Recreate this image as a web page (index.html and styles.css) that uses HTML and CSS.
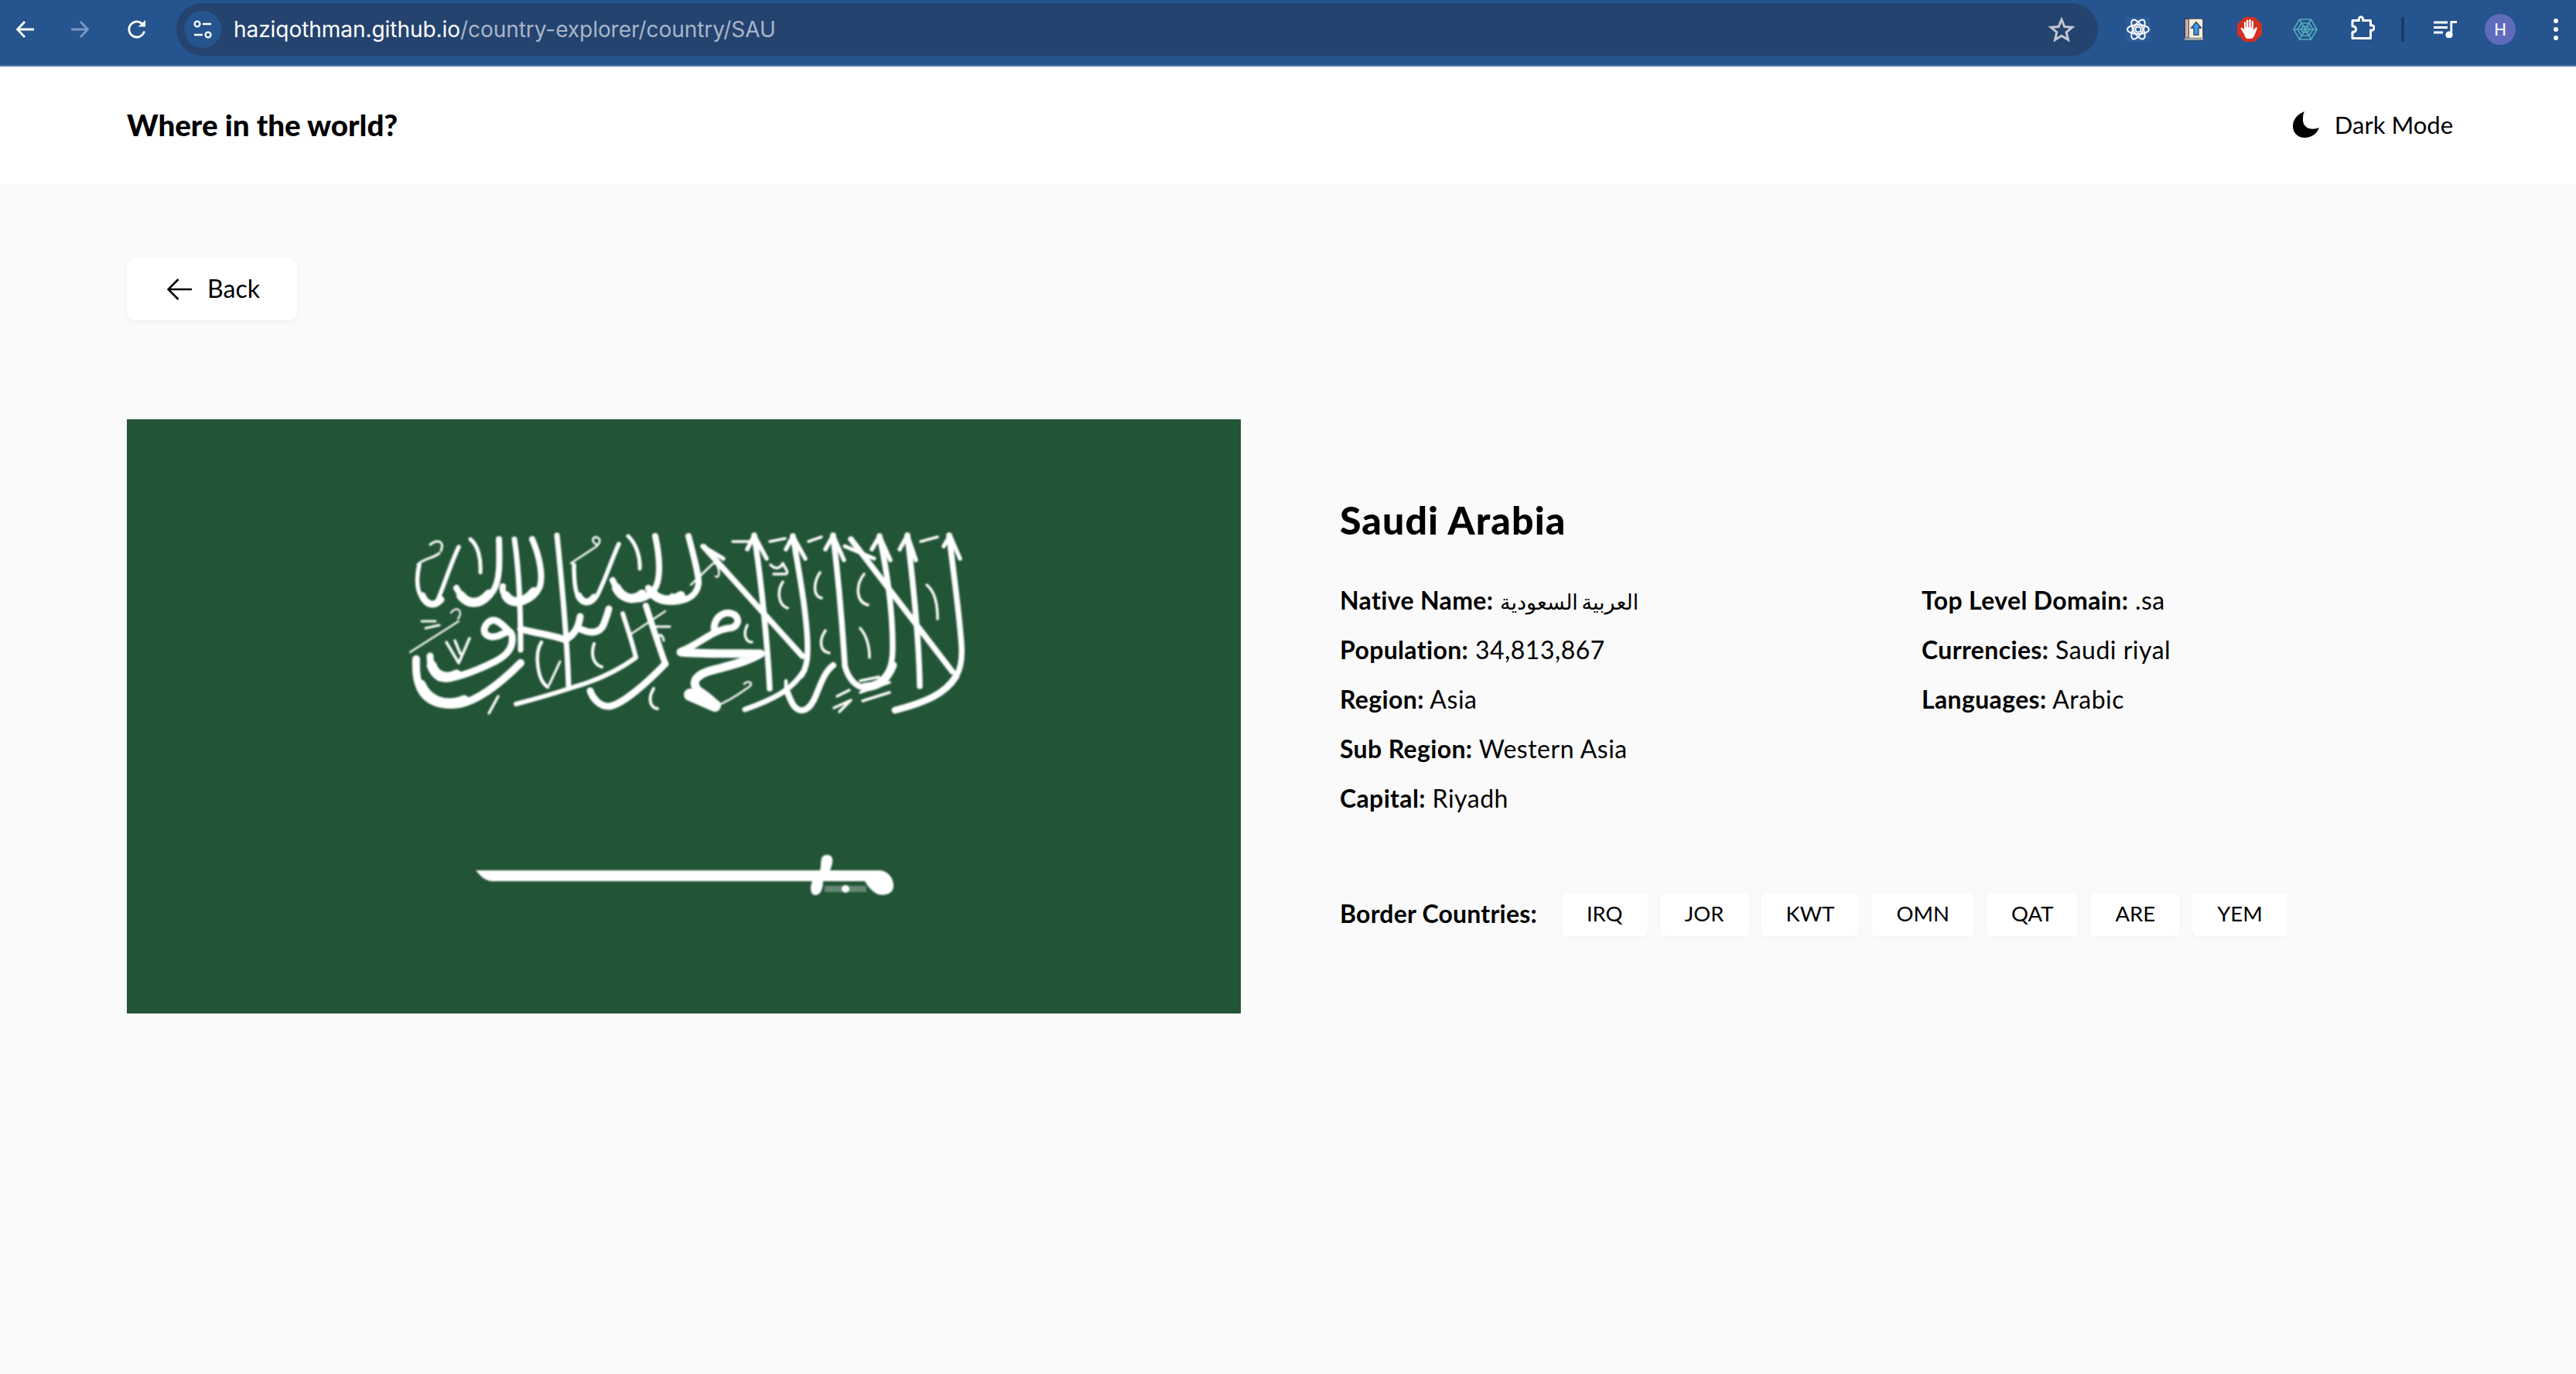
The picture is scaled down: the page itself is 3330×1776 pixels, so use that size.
FILE: index.html
```html
<!DOCTYPE html>
<html lang="en">
<head>
<meta charset="utf-8">
<title>Saudi Arabia - Where in the world?</title>
<link rel="stylesheet" href="styles.css">
</head>
<body>
<div class="toolbar">
  <svg class="nav-icon nav-back" viewBox="0 0 26 24"><path d="M24 12H3M12 2 2.500 12 12 22" fill="none" stroke="#fff" stroke-width="2.800"/></svg>
  <svg class="nav-icon nav-forward" viewBox="0 0 26 24"><path d="M2 12H23M14 2 23.500 12 14 22" fill="none" stroke="#7d99c0" stroke-width="2.800"/></svg>
  <svg class="nav-icon nav-reload" viewBox="0 0 26 24"><path d="M22.500 14.500A10 10 0 1 1 19.500 4.500" fill="none" stroke="#fff" stroke-width="2.800"/><path d="M14.500 8.500H24V0Z" fill="#fff"/></svg>
  <div class="urlbar">
    <span class="site-pill"><svg class="site-icon" viewBox="0 0 26 26"><circle cx="6" cy="6" r="3.400" fill="none" stroke="#fff" stroke-width="2.400"/><path d="M13 6H24M2 20H13" stroke="#fff" stroke-width="2.600"/><circle cx="20" cy="20" r="3.400" fill="none" stroke="#fff" stroke-width="2.400"/></svg></span>
    <span class="url"><span class="url-host">haziqothman.github.io</span><span class="url-path">/country-explorer/country/SAU</span></span>
    <svg class="star" viewBox="0 0 32 30"><path d="M16 3 19.600 11.700 29 12.400 21.800 18.500 24 27.700 16 22.800 8 27.700 10.200 18.500 3 12.400 12.400 11.700Z" fill="none" stroke="#c3c8cf" stroke-width="2.800"/></svg>
  </div>
  <div class="extensions">
    <span class="ext"><svg class="ext-icon" viewBox="0 0 32 32"><rect width="32" height="32" rx="3" fill="#2b5c9c"/><g fill="none" stroke="#fff" stroke-width="1.900"><ellipse cx="16" cy="16" rx="14" ry="6"/><ellipse cx="16" cy="16" rx="14" ry="6" transform="rotate(60 16 16)"/><ellipse cx="16" cy="16" rx="14" ry="6" transform="rotate(120 16 16)"/><circle cx="16" cy="16" r="3.500"/></g></svg></span>
    <span class="ext"><svg class="ext-book" viewBox="0 0 26 30"><rect x="1" y="1" width="24" height="28" rx="2" fill="#f7efdc" stroke="#33475f" stroke-width="1.600"/><rect x="1.500" y="1.500" width="5" height="24" fill="#d9a8a8" stroke="#33475f" stroke-width="1"/><rect x="1" y="25.500" width="24" height="3.500" fill="#9aa3a8"/><path d="M16 5.500 22.500 13H19V22H13V13H9.500Z" fill="#3e97ea" stroke="#26405f" stroke-width="1.300"/></svg></span>
    <span class="ext"><svg class="ext-icon" viewBox="0 0 32 32"><path d="M9.400 0H22.600L32 9.400V22.600L22.600 32H9.400L0 22.600V9.400Z" fill="#d33023"/><path d="M9 22 4.800 15.500C4.200 14 6 13.200 7 14.200L9 16.500V7C9 5.500 11 5.500 11.200 7V13.500H12V4.700C12 3.200 14.300 3.200 14.300 4.700V13.500H15.300V4C15.300 2.500 17.700 2.500 17.700 4V13.500H18.700V6C18.700 4.500 21 4.500 21 6V17L24 13.500C25 12.600 26.300 13.600 25.800 15L22 24.500C21 27 19 28 16.500 28H14C11.500 28 10 26 9 22Z" fill="#fff"/></svg></span>
    <span class="ext"><svg class="ext-web" viewBox="0 0 32 28"><g fill="none" stroke="#55a9ba" stroke-width="1.700"><path d="M8.500 1H23.500L31 14 23.500 27H8.500L1 14Z"/><path d="M11 6H21L26 14 21 22H11L6 14Z"/><path d="M13 10H19L21.500 14 19 18H13L10.500 14Z"/><path d="M8.500 1 23.500 27M23.500 1 8.500 27M1 14H31"/></g></svg></span>
    <span class="ext"><svg class="ext-puzzle" viewBox="0 0 32 32"><path d="M3 6.500H11.500C10.500 3.500 12.500 1.800 14 1.800S17.500 3.500 16.500 6.500H26.500V13C29.500 12 31 14 31 16S29.500 20 26.500 19V29.500H3V21.500C6.500 21.500 7.500 19.500 7.500 17.800S6.500 14 3 14Z" fill="none" stroke="#fff" stroke-width="3" stroke-linejoin="round"/></svg></span>
    <span class="ext-sep-box"><span class="ext-sep"></span></span>
    <span class="ext ext-music-box"><svg class="ext-music" viewBox="0 0 30 22"><path d="M0 2H18M0 8.500H18M0 15H12" stroke="#fff" stroke-width="2.800"/><path d="M22.800 18V1.500H30" fill="none" stroke="#fff" stroke-width="2.800"/><circle cx="20" cy="18" r="4.600" fill="#fff"/></svg></span>
    <span class="ext ext-avatar-box"><span class="avatar">H</span></span>
    <span class="ext-dots-box"><svg class="ext-dots" viewBox="0 0 6 28"><circle cx="3" cy="3" r="3" fill="#fff"/><circle cx="3" cy="14" r="3" fill="#fff"/><circle cx="3" cy="25" r="3" fill="#fff"/></svg></span>
  </div>
</div>

<header class="site-header">
  <h1 class="brand">Where in the world?</h1>
  <div class="mode">
    <svg class="moon" viewBox="0 0 34 34"><path d="M15 0C5 4 0 11 0 19 0 28 7 34 15 34 24 34 31 29 34 21 24 25 14 22 13 12 13 7 13 3 15 0Z" fill="#000"/></svg>
    <span>Dark Mode</span>
  </div>
</header>

<main class="page">
  <button class="back-btn">
    <svg class="back-arrow" viewBox="0 0 32 28"><path d="M32 14H2M14.500 1 1.500 14 14.500 27" fill="none" stroke="#000" stroke-width="2.500"/></svg>
    <span>Back</span>
  </button>
  <section class="detail">
    <svg class="flag" viewBox="164 542 1440 768" role="img" aria-label="Flag of Saudi Arabia">
      <defs><filter id="soft" x="-5%" y="-5%" width="110%" height="110%"><feGaussianBlur stdDeviation="1"/></filter></defs>
      <rect x="164" y="542" width="1440" height="768" fill="#225436"/>
      <g filter="url(#soft)" fill="none" stroke="#fff" stroke-linecap="round" stroke-linejoin="round">
        <g stroke-width="7.500">
          <path d="M1227 692C1231 730 1240 790 1243 835 1244 852 1241 866 1236 874"/>
          <path d="M1173 692C1180 750 1188 820 1189 887"/>
          <path d="M1100 697 1231 868"/>
          <path d="M1137 693C1147 740 1154 790 1154 838 1154 868 1142 886 1122 889 1106 890 1096 876 1092 860"/>
          <path d="M1077 692C1084 750 1089 810 1092 857"/>
          <path d="M1025 693C1034 745 1044 800 1044 840 1044 856 1041 866 1036 873"/>
          <path d="M975 692C984 750 992 830 995 890"/>
          <path d="M910 707 1037 848"/>
          <path d="M947 700 980 700M995 700 1015 696M1045 700 1062 694M1190 700 1212 694" stroke-width="3.500"/>
          <path d="M1092 706 1130 722" stroke-width="5"/>
          <path d="M1220 706 1228 692 1241 722M1163 710 1173 692 1184 724M1127 710 1137 693 1151 724M1016 710 1025 693 1041 722M966 710 975 692 991 722M1067 710 1077 692 1091 724M908 706 935 722" stroke-width="5.500"/>
        </g>
        <g>
          <path d="M1236 874C1222 897 1196 908 1157 918" stroke-width="9"/>
          <path d="M1077 860C1064 870 1060 888 1052 905 1044 920 1034 922 1026 912 1022 906 1020 900 1018 895" stroke-width="8"/>
          <path d="M1040 866C1024 892 1000 904 963 917" stroke-width="7"/>
          <path d="M1154 860C1146 880 1134 888 1118 888" stroke-width="11"/>
        </g>
        <g stroke-width="3.500">
          <path d="M1060 740C1052 752 1050 770 1062 773"/><path d="M1012 752C1004 764 1006 782 1018 786"/><path d="M1117 742C1106 756 1106 778 1122 782"/>
          <path d="M1067 815C1058 828 1060 842 1072 844"/><path d="M966 808C960 820 964 830 972 830"/>
          <path d="M1112 812C1122 824 1124 840 1124 850M1198 756C1208 764 1212 780 1212 800"/>
          <path d="M996 730C1002 736 1008 736 1012 728 1016 738 1020 738 1016 742M1000 742H1014"/>
          <path d="M1136 875 1112 880M1112 895 1150 882M1150 895 1115 906"/>
          <path d="M1082 900 1098 892M1078 915 1100 905 1085 920"/>
          <path d="M1016 880V890" stroke-width="4.500"/>
          <path d="M925 913C945 905 958 895 968 888 975 884 968 878 962 884" stroke-width="2.500"/>
          <path d="M893 756 920 730C928 720 934 750 925 745" stroke-width="2.500"/>
        </g>
        <g stroke-width="8">
          <path d="M890 693C897 720 904 745 903 755 900 772 886 777 870 778 852 778 842 770 838 760"/>
          <path d="M847 693C853 720 854 745 848 758 842 772 826 778 814 773 802 767 796 760 792 750"/>
          <path d="M688 697C698 720 702 745 698 758 690 776 668 786 655 772 650 767 649 762 650 758"/>
          <path d="M645 697C646 730 646 750 638 763 628 778 610 786 598 772 594 767 592 764 590 760"/>
          <path d="M593 707C582 730 574 757 566 775 560 786 546 780 541 763 538 750 540 738 542 730" stroke-width="5.500"/>
          <path d="M800 703C790 725 782 750 772 770 764 784 752 782 746 768 742 758 742 742 742 730" stroke-width="5.500"/>
          <path d="M665 697C670 730 673 780 673 840" stroke-width="7"/>
          <path d="M720 692C726 750 733 820 735 887" stroke-width="7"/>
          <path d="M880 770C862 782 846 772 842 764M830 768C816 780 802 770 797 760M690 765C676 782 660 780 654 770M632 768C618 784 604 780 596 770" stroke-width="12"/>
          <path d="M570 775C560 786 550 780 546 770M768 772C760 782 752 778 748 770" stroke-width="9"/>
        </g>
        <g stroke-width="5">
          <path d="M608 697C618 705 622 722 621 740M812 693C822 702 828 720 827 735"/>
          <path d="M738 728 770 707C776 702 778 696 770 694 764 696 766 702 772 704 775 704" stroke-width="2.500"/>
          <path d="M860 790 815 820" stroke-width="2.500"/><path d="M866 770C876 778 874 768 868 768" stroke-width="2.500"/>
          <path d="M540 730C546 722 560 722 568 715M556 704C566 696 575 700 570 712" stroke-width="3"/>
          <path d="M530 843 593 803M583 792C590 782 600 790 592 800" stroke-width="2.200"/>
          <path d="M545 803H563M550 812 568 808" stroke-width="3"/>
          <path d="M577 830 593 857 607 825M595 845 588 828" stroke-width="3.500"/>
        </g>
        <g stroke-width="10">
          <path d="M660 818C648 806 638 794 628 808 622 818 630 826 644 822 654 818 660 812 662 822 664 836 656 847 640 855 610 870 580 880 568 876 558 870 556 858 556 848" stroke-width="9"/>
          <path d="M673 857C650 880 620 905 594 910 566 914 546 905 540 880 537 868 538 858 538 852" stroke-width="10"/>
          <path d="M600 905C575 915 552 905 544 885M590 872C574 880 562 872 558 860" stroke-width="13"/>
          <path d="M673 813C690 818 720 822 730 827 742 822 748 810 750 797M750 813C765 820 775 818 780 808 783 800 785 795 787 787" stroke-width="9"/>
          <path d="M835 783C842 805 850 830 860 858" stroke-width="8"/>
          <path d="M860 858C835 884 805 910 788 913 775 914 766 902 763 893" stroke-width="9"/>
          <path d="M805 793C812 815 818 832 822 850 800 866 770 880 742 888 715 897 690 904 667 910" stroke-width="6"/>
          <path d="M644 900 632 922" stroke-width="3.500"/>
          <path d="M700 830C690 845 695 880 708 888" stroke-width="4.500"/><path d="M724 855 710 885" stroke-width="3"/>
          <path d="M768 832C762 850 770 860 778 862" stroke-width="4"/><path d="M845 890C836 905 842 915 850 916" stroke-width="4"/>
        </g>
        <path d="M923 812C924 796 938 788 950 795 958 802 952 812 942 812 920 815 905 832 882 841" stroke-width="9"/>
        <path d="M880 843C915 846 950 844 983 845 960 858 935 862 915 868 895 875 896 885 902 892 910 898 918 902 924 910" stroke-width="11"/>
        <path d="M892 898 924 912" stroke-width="16"/>
        <path d="M845 810H866M852 828C850 815 858 822 858 828" stroke-width="3"/>
      </g>
      <g filter="url(#soft)" fill="#fff">
        <path d="M615 1125H1138C1148 1126 1156 1136 1155 1146 1154 1156 1144 1158 1135 1156 1128 1153 1122 1146 1118 1139H1064C1064 1146 1062 1157 1054 1157 1047 1157 1047 1146 1050 1139H635C626 1138 620 1131 615 1125Z"/>
        <path d="M1060 1125C1063 1118 1058 1105 1069 1105 1080 1105 1076 1118 1073 1125Z"/>
        <rect x="1066" y="1145" width="54" height="8" opacity=".3"/>
        <circle cx="1093" cy="1149" r="5"/>
      </g>
    </svg>
    <div class="info">
      <h2 class="country-name">Saudi Arabia</h2>
      <div class="facts">
        <ul class="fact-list">
          <li class="fact"><b>Native Name:</b> <span class="ar" dir="rtl" lang="ar">العربية السعودية</span></li>
          <li class="fact"><b>Population:</b> 34,813,867</li>
          <li class="fact"><b>Region:</b> Asia</li>
          <li class="fact"><b>Sub Region:</b> Western Asia</li>
          <li class="fact"><b>Capital:</b> Riyadh</li>
        </ul>
        <ul class="fact-list">
          <li class="fact"><b>Top Level Domain:</b> .sa</li>
          <li class="fact"><b>Currencies:</b> Saudi riyal</li>
          <li class="fact"><b>Languages:</b> Arabic</li>
        </ul>
      </div>
      <div class="borders">
        <b class="borders-label">Border Countries:</b>
        <a class="chip">IRQ</a><a class="chip">JOR</a><a class="chip">KWT</a><a class="chip">OMN</a><a class="chip">QAT</a><a class="chip">ARE</a><a class="chip">YEM</a>
      </div>
    </div>
  </section>
</main>
</body>
</html>
```
FILE: styles.css
```css
* { box-sizing: border-box; }
html, body { margin: 0; padding: 0; height: 100%; }
body {
  min-height: 1776px;
  background: #fafafa;
  color: #000;
  font-family: "Lato", "DejaVu Sans", sans-serif;
  font-size: 32px;
  overflow: hidden;
  display: flex;
  flex-direction: column;
}
.toolbar {
  height: 86px;
  flex: none;
  background: #25548f;
  border-bottom: 2px solid #4f78ab;
  display: flex;
  align-items: center;
  padding: 4px 0 12px 20px;
}
.nav-icon { width: 26px; height: 24px; flex: none; }
.nav-forward { margin-left: 44px; }
.nav-reload { margin-left: 48px; }
.urlbar {
  flex: 1;
  height: 68px;
  margin-left: 38px;
  background: #24436f;
  border-radius: 34px;
  display: flex;
  align-items: center;
  padding: 0 30px 0 10px;
}
.site-pill {
  width: 48px;
  height: 48px;
  border-radius: 50%;
  background: #25548f;
  display: flex;
  align-items: center;
  justify-content: center;
  flex: none;
}
.site-icon { width: 26px; height: 26px; }
.url {
  margin-left: 16px;
  font-family: "Inter", "Roboto", sans-serif;
  font-size: 28px;
  letter-spacing: -.05px;
  flex: 1;
  white-space: nowrap;
}
.url-host { color: #fff; }
.url-path { color: #a8b5c8; }
.star { width: 34px; height: 32px; flex: none; }
.extensions {
  width: 618px;
  flex: none;
  display: flex;
  align-items: center;
  padding-left: 16px;
}
.ext { width: 72px; display: flex; justify-content: center; align-items: center; flex: none; }
.ext-icon { width: 32px; height: 32px; }
.ext-book { width: 26px; height: 30px; }
.ext-web { width: 32px; height: 28px; }
.ext-puzzle { width: 32px; height: 32px; margin-left: 4px; margin-top: -4px; }
.ext-sep-box { width: 36px; display: flex; justify-content: center; flex: none; }
.ext-sep { width: 4px; height: 32px; border-radius: 2px; background: #193a68; }
.ext-music-box { width: 74px; }
.ext-music { width: 30px; height: 22px; }
.ext-avatar-box { width: 68px; }
.avatar {
  width: 40px;
  height: 40px;
  border-radius: 50%;
  background: #5f6cbb;
  color: #fff;
  font-family: "Roboto", sans-serif;
  font-size: 22px;
  display: flex;
  align-items: center;
  justify-content: center;
}
.ext-dots-box { width: 52px; margin-left: 12px; display: flex; justify-content: center; flex: none; }
.ext-dots { width: 6px; height: 28px; }

.site-header {
  height: 152px;
  flex: none;
  background: #fff;
  display: flex;
  align-items: center;
  justify-content: space-between;
  padding: 0 159px 3px 164px;
}
.brand { margin: 0; font-size: 38.500px; font-weight: 900; }
.mode { display: flex; align-items: center; gap: 20px; font-size: 31px; font-weight: 400; }
.moon { width: 34px; height: 34px; }

.page { padding: 96px 164px 0; flex: 1; }
.back-btn {
  width: 220px;
  height: 80px;
  border: 0;
  border-radius: 12px;
  background: #fff;
  box-shadow: 0 2px 5px rgba(0, 0, 0, .05);
  display: flex;
  align-items: center;
  justify-content: center;
  gap: 20px;
  font: inherit;
  color: #000;
  padding: 0 0 3px 4px;
}
.back-arrow { width: 32px; height: 28px; margin-top: 3px; }
.detail {
  margin-top: 128px;
  display: flex;
  align-items: center;
  gap: 128px;
}
.flag { width: 1440px; height: 768px; flex: none; display: block; }
.info { flex: 1; min-width: 0; }
.country-name { margin: 0; font-size: 50px; line-height: 60px; height: 64px; font-weight: 900; letter-spacing: 1.100px; }
.facts {
  margin-top: 40px;
  display: grid;
  grid-template-columns: 752px 1fr;
}
.fact-list { list-style: none; margin: 0; padding: 0; }
.fact { height: 64px; line-height: 60px; font-weight: 400; white-space: nowrap; letter-spacing: .5px; }
.fact b { font-weight: 700; letter-spacing: .35px; }
.ar { font-family: "DejaVu Sans", sans-serif; font-size: 27px; font-weight: 400; letter-spacing: 0; word-spacing: -4px; }
.borders { margin-top: 88px; display: flex; align-items: center; gap: 16px; height: 56px; }
.borders-label { margin-right: 16px; font-weight: 700; white-space: nowrap; letter-spacing: .2px; padding-bottom: 4px; }
.chip {
  height: 56px;
  line-height: 54px;
  padding: 0 32px;
  background: #fff;
  border-radius: 6px;
  box-shadow: 0 1px 4px rgba(0, 0, 0, .04);
  font-size: 27.500px;
  font-weight: 400;
}
```
